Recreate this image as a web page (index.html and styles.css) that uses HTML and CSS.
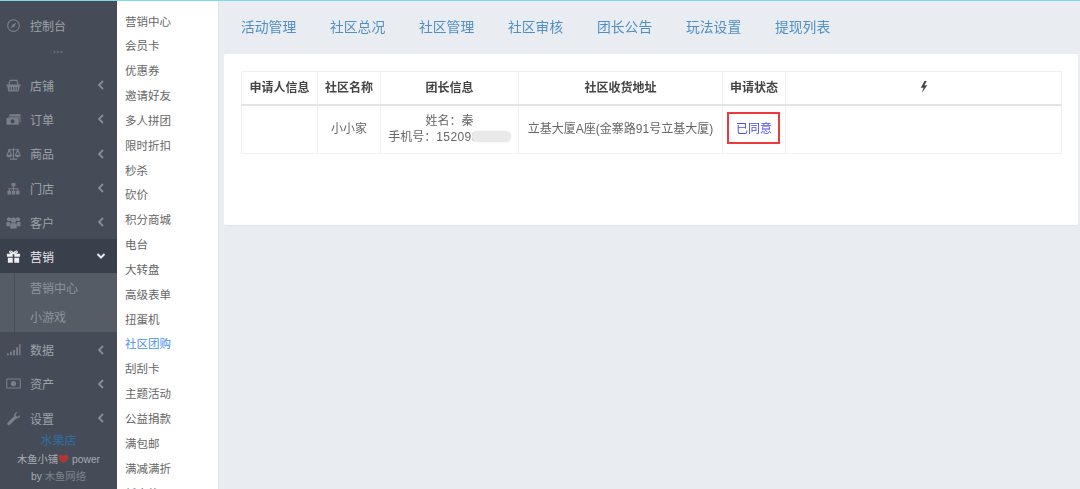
FILE: index.html
```html
<!DOCTYPE html>
<html lang="zh-CN">
<head>
<meta charset="utf-8">
<title>社区团购</title>
<link rel="stylesheet" href="styles.css">
</head>
<body>
<div class="app">
  <aside class="side">
    <a class="item first"><svg class="ico" viewBox="0 0 16 16"><circle cx="8" cy="8" r="6.200"/><path class="fill" d="M11 5 9 9 7 7z M5 11 7 7l2 2z"/></svg><span class="label">控制台</span></a>
    <div class="dots">•••</div>
    <a class="item"><svg class="ico" viewBox="0 0 16 16"><path class="fill" d="M.5 7h15v1.600h-.8L13.500 14.500h-11L1.300 8.600H.5zM4 9.500v3.500h1V9.500zM6.500 9.500v3.500h1V9.500zM9 9.500v3.500h1V9.500zM11.500 9.500v3.500h1V9.500z" fill-rule="evenodd"/><path d="M3 7 4.500 2.500h7L13 7"/></svg><span class="label">店铺</span><svg class="chev" viewBox="0 0 8 10"><path d="M6 1 2 5l4 4"/></svg></a>
    <a class="item"><svg class="ico" viewBox="0 0 16 16"><path class="fill" d="M3.500 2.500h12v2h-12zM2.500 5h13v6h-1V6h-12z"/><path class="fill" d="M.5 6.500h13v7H.5z"/><circle class="hole" cx="7" cy="10" r="2.200"/></svg><span class="label">订单</span><svg class="chev" viewBox="0 0 8 10"><path d="M6 1 2 5l4 4"/></svg></a>
    <a class="item"><svg class="ico" viewBox="0 0 16 16"><path d="M8 2v11.500M4 14h8M2 4h12M3.500 4 1 10h5zM12.500 4 10 10h5z"/><path class="fill" d="M.5 10h6c-.5 2.500-5.500 2.500-6 0zM9.500 10h6c-.5 2.500-5.500 2.500-6 0z"/></svg><span class="label">商品</span><svg class="chev" viewBox="0 0 8 10"><path d="M6 1 2 5l4 4"/></svg></a>
    <a class="item"><svg class="ico" viewBox="0 0 16 16"><path class="fill" d="M6 2h4v3.600H6zM1.500 10.500h3.800v3.800H1.500zM6.100 10.500h3.800v3.800H6.100zM10.700 10.500h3.800v3.800h-3.800z"/><path d="M8 5.500v5M3.400 10.500V8.200h9.200v2.300"/></svg><span class="label">门店</span><svg class="chev" viewBox="0 0 8 10"><path d="M6 1 2 5l4 4"/></svg></a>
    <a class="item"><svg class="ico" viewBox="0 0 16 16"><circle class="fill" cx="3.200" cy="4.500" r="2.200"/><circle class="fill" cx="12.800" cy="4.500" r="2.200"/><circle class="fill" cx="8" cy="5.500" r="2.800"/><path class="fill" d="M.5 7.500h3.700v4.500H.5zM11.800 7.500h3.700v4.500h-3.700zM4.500 8.800h7V14.500h-7z"/></svg><span class="label">客户</span><svg class="chev" viewBox="0 0 8 10"><path d="M6 1 2 5l4 4"/></svg></a>
    <a class="item active"><svg class="ico" viewBox="0 0 16 16"><path class="fill" d="M1 5h6.200v3.200H1zM8.800 5H15v3.200H8.800zM2 9.200h5.200v5.600H2zM8.800 9.200H14v5.600H8.800z"/><path d="M8 4.700C6 1.500 3.500 1.500 4 3.500c.3 1 2.500 1.200 4 1.200 1.500 0 3.700-.2 4-1.200.5-2-2-2-4 1.200z"/></svg><span class="label">营销</span><svg class="chev down" viewBox="0 0 10 8"><path d="M1.500 2 5 5.500 8.500 2"/></svg></a>
    <div class="sub">
      <a class="sub-item">营销中心</a>
      <a class="sub-item">小游戏</a>
    </div>
    <a class="item"><svg class="ico" viewBox="0 0 16 16"><path class="fill" d="M1 12h2v2H1zM4.300 10.500h2V14h-2zM7.600 8.500h2V14h-2zM10.900 5.500h2V14h-2zM14 2.500h1.500V14H14z"/></svg><span class="label">数据</span><svg class="chev" viewBox="0 0 8 10"><path d="M6 1 2 5l4 4"/></svg></a>
    <a class="item"><svg class="ico" viewBox="0 0 16 16"><rect x=".8" y="3.200" width="14.400" height="9.600" rx=".5"/><circle class="fill" cx="8" cy="8" r="2.800"/></svg><span class="label">资产</span><svg class="chev" viewBox="0 0 8 10"><path d="M6 1 2 5l4 4"/></svg></a>
    <a class="item"><svg class="ico" viewBox="0 0 16 16"><path class="fill" d="M15 4.200c.4 2.300-1.700 4.300-4 3.800l-6.800 6.600c-.7.700-1.800.7-2.400 0-.7-.7-.6-1.700 0-2.300l6.800-6.800C8 3 10.200.8 12.600 1.300L10.200 3.800l.5 1.900 1.900.5z"/></svg><span class="label">设置</span><svg class="chev" viewBox="0 0 8 10"><path d="M6 1 2 5l4 4"/></svg></a>
    <div class="brand">
      <div class="shop">水果店</div>
      <div class="power">木鱼小铺<svg class="heart" viewBox="0 0 12 11"><path d="M6 10.500C2 7.500.5 5.500.5 3.500.5 1.500 2 .5 3.300.5 4.500.5 5.500 1.200 6 2.300 6.500 1.200 7.500.5 8.700.5 10 .5 11.500 1.500 11.500 3.500c0 2-1.500 4-5.500 7z"/></svg> power</div>
      <div class="by">by <span class="muted">木鱼网络</span></div>
    </div>
  </aside>
  <nav class="second">
    <a>营销中心</a><a>会员卡</a><a>优惠券</a><a>邀请好友</a><a>多人拼团</a><a>限时折扣</a><a>秒杀</a><a>砍价</a><a>积分商城</a><a>电台</a><a>大转盘</a><a>高级表单</a><a>扭蛋机</a><a class="current">社区团购</a><a>刮刮卡</a><a>主题活动</a><a>公益捐款</a><a>满包邮</a><a>满减满折</a><a>新人礼</a>
  </nav>
  <main class="main">
    <div class="tabs">
      <a>活动管理</a><a>社区总况</a><a>社区管理</a><a>社区审核</a><a>团长公告</a><a>玩法设置</a><a>提现列表</a>
    </div>
    <section class="card">
      <table class="table">
        <colgroup><col class="c1"><col class="c2"><col class="c3"><col class="c4"><col class="c5"><col></colgroup>
        <thead>
          <tr><th>申请人信息</th><th>社区名称</th><th>团长信息</th><th>社区收货地址</th><th>申请状态</th><th><svg class="bolt" viewBox="0 0 8 12"><path d="M4.500 0 .8 6.800h2.700L1.800 12 7.200 4.300H4.300L6.800 0z"/></svg></th></tr>
        </thead>
        <tbody>
          <tr>
            <td></td>
            <td>小小家</td>
            <td><div>姓名：秦</div><div class="phone">手机号：<span class="digits">152098</span><span class="smudge"></span></div></td>
            <td>立基大厦A座(金寨路91号立基大厦)</td>
            <td class="status"><span class="agreed">已同意</span></td>
            <td></td>
          </tr>
        </tbody>
      </table>
    </section>
  </main>
</div>
</body>
</html>
```
FILE: styles.css
```css
* { box-sizing: border-box; }
html, body { margin: 0; height: 100%; overflow: hidden; }
body {
  font-family: "Liberation Sans", "Noto Sans CJK SC", sans-serif;
  font-size: 12px;
  color: #555;
  background: #e9edf2;
}
.app {
  display: flex;
  height: 489px;
  border-top: 1px solid #7fd8e8;
  filter: blur(.45px);
  overflow: hidden;
}
.side {
  width: 117px;
  flex: none;
  background: #454c58;
  color: #aeb3ba;
  padding-top: 7px;
  display: flex;
  flex-direction: column;
  overflow: hidden;
}
.item {
  display: flex;
  align-items: center;
  height: 34.3px;
  flex: none;
  padding: 0 12px 0 6px;
  color: #9ea2a9;
}
.first { height: 34px; }
.ico {
  width: 15px;
  height: 15px;
  flex: none;
  fill: none;
  stroke: #7a808a;
  stroke-width: 1.2;
  margin-right: 9px;
}
.ico .fill { fill: #7a808a; stroke: none; }
.ico .hole { fill: #454c58; stroke: none; }
.label { flex: 1; }
.chev {
  width: 8px;
  height: 10px;
  fill: none;
  stroke: #878d96;
  stroke-width: 1.8;
}
.dots {
  height: 11px;
  flex: none;
  line-height: 11px;
  font-size: 7px;
  letter-spacing: 1px;
  color: #6a717b;
  text-align: center;
  margin-top: 4px;
  margin-bottom: 11px;
}
.active { background: #393f4b; color: #e8eaed; height: 34px; }
.active .ico { stroke: #eef0f2; }
.active .ico .fill { fill: #eef0f2; }
.chev.down { width: 10px; height: 8px; stroke: #e8eaed; stroke-width: 2; margin-right: -1px; }
.sub {
  flex: none;
  height: 59px;
  background: #555c66;
  padding: 1.500px 0 0 14px;
  position: relative;
  display: flex;
  flex-direction: column;
}
.sub::before {
  content: "";
  width: 1px;
  background: #474e59;
  position: absolute;
  left: 14px;
  top: 0;
  bottom: 0;
}
.sub-item {
  height: 29.500px;
  line-height: 29.500px;
  padding-left: 16px;
  color: #8f949b;
}
.brand {
  text-align: center;
  font-size: 10.300px;
  line-height: 17.500px;
  margin-top: -2px;
  color: #a6abb2;
}
.shop { color: #2e6ea3; font-size: 12px; }
.power { white-space: nowrap; }
.heart { width: 11px; height: 10px; fill: #a8383a; margin: 0 0 -1px 0; }
.muted { color: #7d838b; }
.second {
  width: 102px;
  flex: none;
  background: #fff;
  padding: 8.500px 0 0 8px;
  display: flex;
  flex-direction: column;
  font-size: 11.500px;
  overflow: hidden;
  border-right: 1px solid #dfe3ea;
}
.second a {
  height: 24.850px;
  line-height: 24.850px;
  flex: none;
  color: #666;
  white-space: nowrap;
}
.second a.current { color: #4a90e8; }
.main { flex: 1; min-width: 0; padding: 0 2px 0 5px; }
.tabs {
  display: flex;
  gap: 34px;
  height: 53px;
  padding: 17px 0 0 17px;
  font-size: 13.800px;
  line-height: 20px;
  color: #4f8fc2;
}
.tabs a { width: 55px; white-space: nowrap; }
.card {
  background: #fff;
  height: 172px;
  border-bottom: 1px solid #e1e4e9;
  padding: 17px 16px 0 17px;
  border-radius: 2px;
}
.table {
  width: 821px;
  border-collapse: collapse;
  table-layout: fixed;
  text-align: center;
}
.c1 { width: 76px; }
.c2 { width: 63px; }
.c3 { width: 138px; }
.c4 { width: 204px; }
.c5 { width: 63px; }
.table th, .table td {
  border: 1px solid #eff0f2;
  padding: 0;
  white-space: nowrap;
}
.table th {
  height: 33px;
  padding-bottom: 2px;
  font-weight: 700;
  color: #444;
  border-bottom: 2px solid #e3e4e6;
}
.table td { height: 49px; color: #666; line-height: 16px; }
.bolt { width: 8px; height: 12px; fill: #444; vertical-align: -2px; }
.phone { white-space: nowrap; }
.digits { letter-spacing: .4px; }
.smudge {
  display: inline-block;
  width: 39px;
  height: 11px;
  vertical-align: -1px;
  background: #e9e9e9;
  border-radius: 6px;
  margin-left: -7px;
  box-shadow: 0 0 2px #e9e9e9;
}
.status { position: relative; }
.agreed { color: #4a4af0; }
.status::after {
  content: "";
  position: absolute;
  left: 4px;
  right: 5px;
  top: 6px;
  bottom: 9px;
  border: 2px solid #ee3a3a;
}
```
